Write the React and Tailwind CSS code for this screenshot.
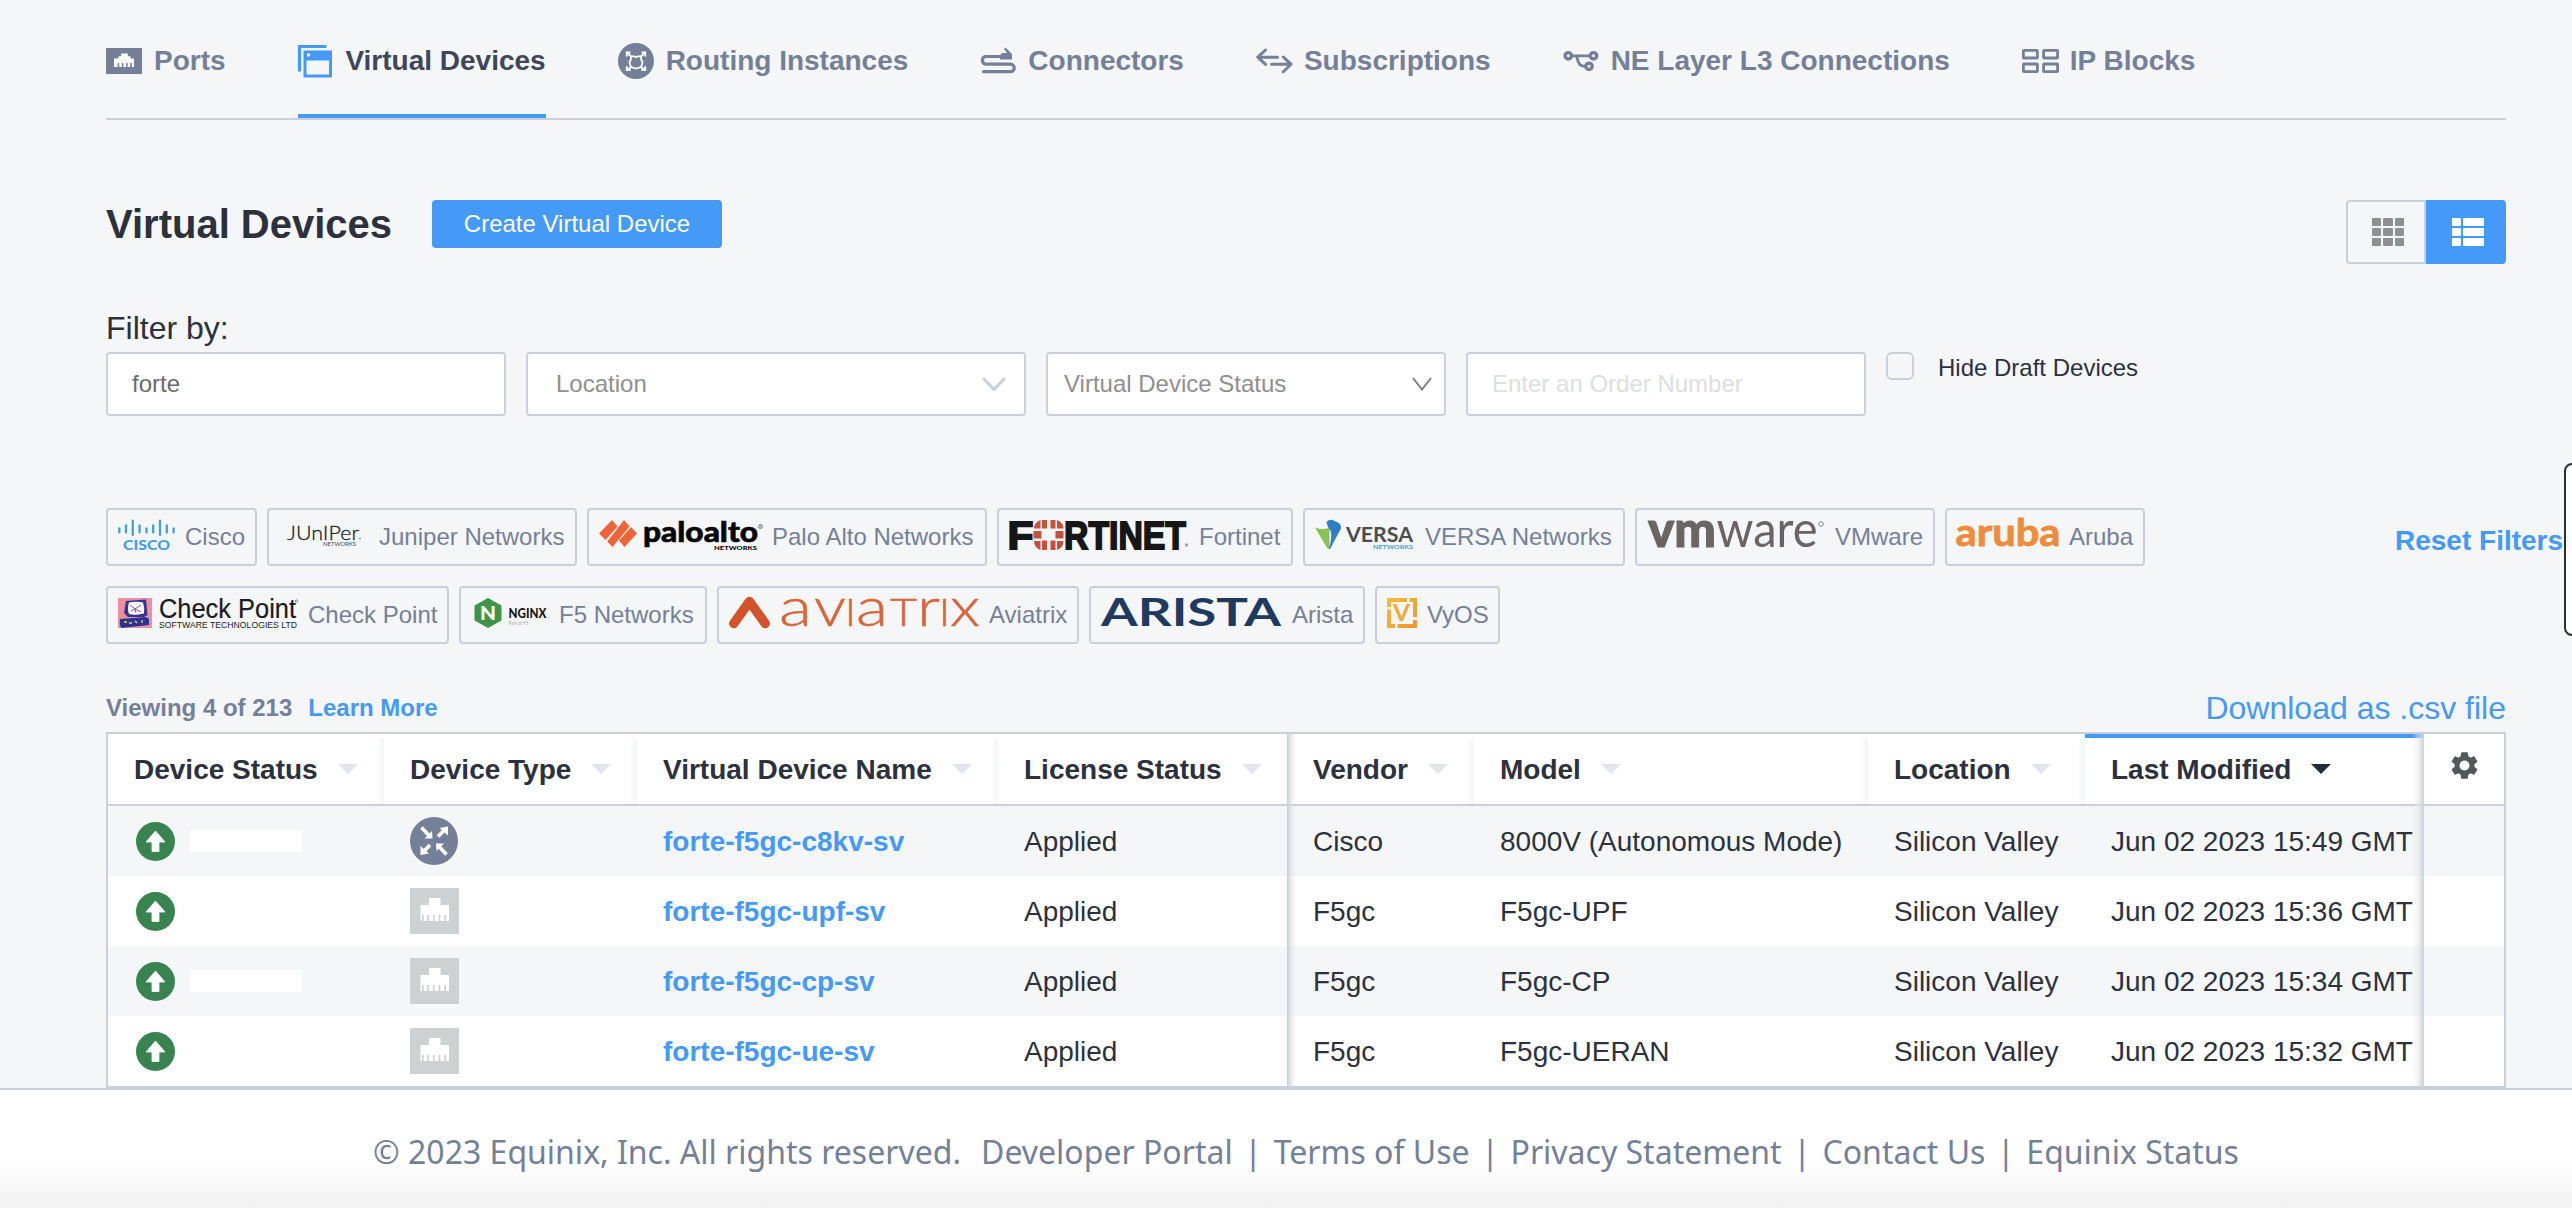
import React from "react";
import { MdSettings } from "react-icons/md";

const LATO = "Lato, sans-serif";
const ARIAL = '"Liberation Sans", Arial, sans-serif';

/* ---------- tab icons ---------- */

function Jack({ className, width, height }) {
  return (
    <svg className={className} width={width} height={height} viewBox="0 0 36 26">
      <rect width="36" height="26" fill="currentColor" />
      <path d="M8 19V10.5h4.500V8.200h2.700V5.500h6.600v2.700h2.700v2.300H28V19h-2.200v-4h-1.600v4h-2.600v-4H20v4h-2.600v-4h-1.600v4h-2.600v-4h-1.600v4z" fill="#fff" />
    </svg>
  );
}

function WindowsIcon() {
  return (
    <svg width="36" height="34" viewBox="0 0 36 34" className="-ml-px">
      <path d="M2.500 27.500V2.500h27" fill="none" stroke="#4599f7" strokeWidth="3.200" />
      <rect x="8" y="8" width="25.500" height="24" fill="#f4f6f8" stroke="#4599f7" strokeWidth="3" />
      <rect x="7" y="7" width="27.500" height="9.500" fill="#4599f7" />
      <circle cx="11.500" cy="11" r="1.700" fill="#fff" />
    </svg>
  );
}

function RoutingIcon() {
  return (
    <svg width="36" height="36" viewBox="0 0 36 36">
      <circle cx="18" cy="18" r="18" fill="currentColor" />
      <g fill="none" stroke="#fff" strokeWidth="1.800" strokeLinecap="round" strokeLinejoin="round">
        <path d="M8.500 9.500l4.500 3.800h3l2 1 2-1h3l4.500-3.800M13 13.300q.5 3-1.500 5.700 0 3.500 2 5l-5 3M23 13.300q-.5 3 1.500 5.700 0 3.500-2 5l5 3M13.500 24q4.500 2.600 9 0" />
        <path d="M8.800 12.800V9.500h3M27.200 12.800V9.500h-3M8.800 24v3H12M27.200 24v3H24" />
      </g>
    </svg>
  );
}

function ConnectorIcon() {
  return (
    <svg width="36" height="28" viewBox="0 0 36 28">
      <path d="M20 9.500H5.500a3.700 3.900 0 0 0 0 7.700h25a3.600 3.600 0 0 1 0 7.500H3.500" fill="none" stroke="currentColor" strokeWidth="3.200" strokeLinecap="round" />
      <path d="M19 9.500l3-3.500h5l-3-4 1.500-1.500L32 7v5.500H20.500z" fill="currentColor" />
    </svg>
  );
}

function SwapIcon() {
  return (
    <svg width="37" height="28" viewBox="0 0 37 28" className="-mr-px">
      <g fill="none" stroke="currentColor" strokeWidth="3" strokeLinecap="round" strokeLinejoin="round">
        <path d="M9.500 3L1.800 10.200l7.700 7.200M2 10.200h19.500M27.300 10l7.700 7.200-7.700 7.500M34.500 17.200H15.500" />
      </g>
    </svg>
  );
}

function LayerIcon() {
  return (
    <svg width="36" height="28" viewBox="0 0 36 28">
      <g fill="none" stroke="currentColor" strokeWidth="3.400">
        <circle cx="5.300" cy="8.800" r="3.200" />
        <circle cx="30.500" cy="8.800" r="3.200" />
        <circle cx="26" cy="19.300" r="3.200" />
        <path d="M9 8.800h18M13.500 9c2 7 2.500 10.300 9 10.300" strokeWidth="2.800" />
      </g>
    </svg>
  );
}

function BlocksIcon() {
  return (
    <svg width="37" height="24" viewBox="0 0 37 24" className="-mr-px">
      <g fill="none" stroke="currentColor" strokeWidth="2.800">
        <rect x="1.400" y="1.400" width="14" height="7.600" rx="0.500" />
        <rect x="21.600" y="1.400" width="14" height="7.600" rx="0.500" />
        <rect x="1.400" y="15" width="14" height="7.600" rx="0.500" />
        <rect x="21.600" y="15" width="14" height="7.600" rx="0.500" />
      </g>
    </svg>
  );
}

const TABS = [
  ["Ports", <Jack width="36" height="26" />],
  ["Virtual Devices", <WindowsIcon />],
  ["Routing Instances", <RoutingIcon />],
  ["Connectors", <ConnectorIcon />],
  ["Subscriptions", <SwapIcon />],
  ["NE Layer L3 Connections", <LayerIcon />],
  ["IP Blocks", <BlocksIcon />],
];

/* ---------- vendor logos ---------- */

function Logo({ w, children }) {
  return (
    <svg width={w} height="30" viewBox={`0 0 ${w} 30`} className="shrink-0 overflow-visible">
      {children}
    </svg>
  );
}

function Word({ x, y, len, size, children, ...rest }) {
  return (
    <text x={x} y={y} fontSize={size} textLength={len} lengthAdjust="spacingAndGlyphs" fontFamily={LATO} {...rest}>
      {children}
    </text>
  );
}

const CISCO_BARS = [
  [1.3, 7.7, 13], [8, 4.7, 13], [14.8, 0, 15.5], [21.6, 4.700, 13], [28.500, 7.700, 13],
  [35.200, 4.700, 13], [42, 0, 15.500], [48.800, 4.700, 13], [55.600, 7.700, 13],
];

const CiscoLogo = () => (
  <Logo w={57}>
    <g stroke="#42a0db" strokeWidth="2.300" strokeLinecap="round">
      {CISCO_BARS.map(([x, a, b]) => <line key={x} x1={x} x2={x} y1={a + 0.6} y2={b - 0.6} />)}
    </g>
    <Word x={5} y={30} len={47} size={14} fontWeight="900" fill="#42a0db">CISCO</Word>
  </Logo>
);

const JuniperLogo = () => (
  <Logo w={90}>
    <Word x={8} y={19.500} len={72} size={20} fontWeight="300" fill="#222" stroke="#222" strokeWidth="0.300">JUnIPer</Word>
    <Word x={44} y={25.500} len={33} size={6} fill="#444">NETWORKS</Word>
    <circle cx="81" cy="18.500" r="0.700" fill="#444" />
  </Logo>
);

const PaloLogo = () => (
  <Logo w={163}>
    <g fill="#ec6438">
      <path d="M0 13.500L13 0l5.500 6.500L6.500 20z" />
      <path d="M8.300 21.500L25 0l5.500 6.500L13.500 27z" />
      <path d="M20 20.500L32 7l6 6.500L25.500 27z" />
    </g>
    <Word x={44} y={22} len={115} size={29} fontWeight="900" fill="#050505" stroke="#050505" strokeWidth="0.6">paloalto</Word>
    <Word x={115} y={30} len={43} size={6} fontWeight="900" fill="#050505">NETWORKS</Word>
    <circle cx="161.500" cy="6.500" r="2" fill="none" stroke="#555" strokeWidth="0.700" />
    <text x="160.500" y="7.700" fontSize="3" fontFamily={LATO} fill="#555">R</text>
  </Logo>
);

const FortinetLogo = () => (
  <Logo w={180}>
    <Word x={-1.500} y={29} len={26} size={39} fontWeight="bold" fill="#161616" stroke="#161616" strokeWidth="1.800" fontFamily={ARIAL}>F</Word>
    <g fill="#c9503c">
      <path d="M33 0h5v8.500h-5zM41.500 0h5v8.500h-5zM33 20.500h5V30h-5zM41.500 20.500h5V30h-5z" />
      <path d="M31.500 0v8.500H25q0-6 6.500-8.500zM48 0v8.500h6.500q0-6-6.500-8.500zM31.500 30v-9H25q0 6.500 6.500 9zM48 30v-9h6.500q0 6.500-6.500 9z" />
      <path d="M24.500 11h8v7.500h-8zM46.500 11h8v7.500h-8z" />
    </g>
    <Word x={55} y={29} len={122} size={39} fontWeight="bold" fill="#161616" stroke="#161616" strokeWidth="1.800" fontFamily={ARIAL}>RTINET</Word>
    <circle cx="177.500" cy="25" r="1.800" fill="#aaa" />
  </Logo>
);

const VersaLogo = () => (
  <Logo w={100}>
    <path d="M0 7.500q8 3 14.500 0V29q-2 0-3-2z" fill="#8dc153" />
    <path d="M11.500 2q4-4 9-.5 6 1.500 5.500 7L15 29h-1.200q4-12 1.700-18.500-2.500-2-4-8.500z" fill="#2f7fc4" />
    <Word x={31} y={22} len={67} size={21} fontWeight="bold" fill="#4c4c4e">VERSA</Word>
    <Word x={58} y={29} len={40} size={6.200} fontWeight="bold" fill="#3f9fdb">NETWORKS</Word>
  </Logo>
);

const VmwareLogo = () => (
  <Logo w={178}>
    <Word x={1} y={27} len={68} size={49} fontWeight="900" fill="#6a6465" stroke="#6a6465" strokeLinejoin="round">vm</Word>
    <Word x={69.500} y={27} len={101} size={50} fill="#6a6465">ware</Word>
    <circle cx="174" cy="4" r="2.300" fill="none" stroke="#8a8586" />
  </Logo>
);

const ArubaLogo = () => (
  <Logo w={102}>
    <Word x={-1.500} y={25.500} len={105} size={38} fontWeight="bold" fill="#ed8c3a" stroke="#ed8c3a" strokeWidth="0.800" strokeLinejoin="round">
      aruba
    </Word>
  </Logo>
);

const CheckPointLogo = () => (
  <Logo w={180}>
    <rect width="34" height="30" fill="#e8919f" />
    <path d="M8 3l20-1.500L29.500 17 26 19H10L6 15z" fill="#35339b" />
    <path d="M11 4.500q8-1.500 14 0 2 6 1 11-7 2-15 .5-2-5 0-11.500z" fill="#fff" />
    <path d="M12 7l5 4 6-4M13 13l4-2 6 3M17 11l1 4" fill="none" stroke="#a04a90" strokeWidth="1" />
    <path d="M2 21l26-2 3 2v6L3 30q-2-4-1-9z" fill="#2c3290" />
    <path d="M6 24h3M11 25h3M17 23l2 2M24 22v3" stroke="#e8d44a" strokeWidth="1.400" />
    <Word x={41} y={19.500} len={137} size={27} fill="#1b1b1b" stroke="#1b1b1b" strokeWidth="0.200" fontFamily={ARIAL}>Check Point</Word>
    <Word x={41} y={30} len={138} size={8.700} fill="#1b1b1b" fontFamily={ARIAL}>SOFTWARE TECHNOLOGIES LTD</Word>
    <circle cx="178.500" cy="3" r="1.200" fill="none" stroke="#444" strokeWidth="0.600" />
  </Logo>
);

const NginxLogo = () => (
  <Logo w={78}>
    <g transform="translate(3.500 0)">
      <path d="M13.500 0L27 7.500v15L13.500 30 0 22.500v-15z" fill="#3f9547" />
      <Word x={5.500} y={21.500} len={16} size={18} fontWeight="900" fill="#fff">N</Word>
      <Word x={34} y={20} len={38} size={14} fontWeight="900" fill="#161616">NGINX</Word>
      <Word x={34} y={26.500} len={20} size={4.800} fill="#aaa">Part of F5</Word>
      <circle cx="74.500" cy="19.500" r="0.600" fill="#aaa" />
    </g>
  </Logo>
);

/* Unicase wordmark: capitals are scaled down to the x-height of the lowercase letters. */
const AviatrixLogo = () => (
  <Logo w={250}>
    <path d="M4.800 25.500L20.500 3.500 36.200 25.500" fill="none" stroke="#d2532a" strokeWidth="9.500" strokeLinecap="round" strokeLinejoin="round" />
    <g fill="#d9653a" stroke="#d9653a" strokeWidth="0.500" fontWeight="300">
      <Word x={50} y={28} len={33} size={54}>a</Word>
      <Word x={85} y={28} len={32} size={54}>v</Word>
      <Word x={116} y={28} len={11} size={38}>I</Word>
      <Word x={127} y={28} len={32} size={54}>a</Word>
      <Word x={161} y={28} len={27} size={38}>T</Word>
      <Word x={188} y={28} len={23} size={54}>r</Word>
      <Word x={210} y={28} len={11} size={38}>I</Word>
      <Word x={221} y={28} len={30} size={54}>x</Word>
    </g>
  </Logo>
);

const AristaLogo = () => (
  <Logo w={181}>
    <Word x={0} y={28} len={180} size={38.500} fontWeight="bold" fill="#1f3960">ARISTA</Word>
  </Logo>
);

const VyosLogo = () => (
  <Logo w={30}>
    <defs>
      <linearGradient id="vyos" x1="0" y1="0" x2="1" y2="1">
        <stop offset="0" stopColor="#f7bf3c" />
        <stop offset="1" stopColor="#f0932f" />
      </linearGradient>
    </defs>
    <path d="M0 0h20v4H4v5H0zM22.500 0H30v19h-4V4h-3.500zM0 11.500h4V26h4v4H0zM10.500 26H26v-4h4v8H10.500z" fill="url(#vyos)" />
    <Word x={6} y={23} len={17} size={22} fontWeight="bold" fill="#f4a936">V</Word>
  </Logo>
);

const VENDORS = [
  ["Cisco", "w-[151px]", CiscoLogo],
  ["Juniper Networks", "w-[310px]", JuniperLogo],
  ["Palo Alto Networks", "w-[400px]", PaloLogo],
  ["Fortinet", "w-[296px]", FortinetLogo],
  ["VERSA Networks", "w-[322px]", VersaLogo],
  ["VMware", "w-[300px]", VmwareLogo],
  ["Aruba", "w-[200px]", ArubaLogo],
  ["Check Point", "w-[343px]", CheckPointLogo],
  ["F5 Networks", "w-[248px]", NginxLogo],
  ["Aviatrix", "w-[362px]", AviatrixLogo],
  ["Arista", "w-[276px]", AristaLogo],
  ["VyOS", "w-[125px]", VyosLogo],
];

/* ---------- table ---------- */

const GRID = "grid grid-cols-[276px_253px_361px_289px_187px_394px_217px_339px_80px]";

const COLUMNS = ["Device Status", "Device Type", "Virtual Device Name", "License Status", "Vendor", "Model", "Location", "Last Modified"];

const ROWS = [
  ["forte-f5gc-c8kv-sv", "Cisco", "8000V (Autonomous Mode)", "Jun 02 2023 15:49 GMT", true],
  ["forte-f5gc-upf-sv", "F5gc", "F5gc-UPF", "Jun 02 2023 15:36 GMT", false],
  ["forte-f5gc-cp-sv", "F5gc", "F5gc-CP", "Jun 02 2023 15:34 GMT", false],
  ["forte-f5gc-ue-sv", "F5gc", "F5gc-UERAN", "Jun 02 2023 15:32 GMT", false],
];

function UpIcon() {
  return (
    <svg width="39" height="39" viewBox="0 0 39 39" className="mb-px">
      <circle cx="19.500" cy="19.500" r="19.500" fill="#38834f" />
      <path d="M19.500 9l9.500 11h-6v9.500h-7V20h-6z" fill="#fff" stroke="#fff" strokeWidth="0.800" strokeLinejoin="round" />
    </svg>
  );
}

function RouterIcon() {
  return (
    <svg width="48" height="48" viewBox="0 0 48 48" className="mb-0.5">
      <circle cx="24" cy="24" r="24" fill="#748098" />
      <g stroke="#fff" strokeWidth="3.600">
        <path d="M11.500 10.500l7 7.500M28 19.500l6.500-6.500M20 28l-6.500 6.500M36.500 37.500l-7-7.500" />
      </g>
      <path d="M22.500 21.500h-8L22 14zM38 9.500v9L29.500 11zM10.500 38v-9l8.500 7.500zM26 26.500h8L26.500 34z" fill="#fff" />
    </svg>
  );
}

function Caret({ active }) {
  return (
    <svg width="20" height="10" viewBox="0 0 20 10" className="mb-0.5 ml-5">
      <path d="M0 0h20L10 10z" fill={active ? "#262b38" : "#e2e5ea"} />
    </svg>
  );
}

function HeaderCell({ label, index }) {
  const active = index === 7;
  return (
    <div className="flex h-[70px] justify-between">
      <div className={`flex grow items-center pl-[26px] ${active ? "border-t-4 border-[#4599f7] pb-0.5" : "pt-0.5"}`}>
        <span>{label}</span>
        <Caret active={active} />
      </div>
      {index !== 3 && !active && <div className="mt-1 w-2 bg-linear-to-r from-white to-[#f4f5f6]" />}
    </div>
  );
}

function DeviceTable() {
  return (
    <div className="relative border-2 border-[#cacfd9] bg-white text-[28px] whitespace-nowrap text-[#2c313d]">
      <div className={`${GRID} box-content h-[70px] border-b-2 border-[#cacfd9] font-bold`}>
        {COLUMNS.map((label, i) => <HeaderCell key={label} label={label} index={i} />)}
        <div className="flex items-center justify-center pb-2">
          <MdSettings size={33} color="#555657" />
        </div>
      </div>
      {ROWS.map(([name, vendor, model, modified, router], i) => (
        <div key={name} className={`${GRID} h-[70px] items-center pt-0.5 ${i % 2 === 0 ? "bg-[#f4f6f8]" : "bg-white"}`}>
          <div className="flex items-center pl-7">
            <UpIcon />
            <span className="mb-0.5 ml-[15px] h-[22px] w-28 bg-white" />
          </div>
          <div className="pl-[26px]">
            {router ? <RouterIcon /> : (
              <svg width="49" height="46" viewBox="0 0 49 46" className="mb-0.5">
                <rect width="49" height="46" fill="#cfd0d2" />
                <path d="M10.500 33V17H19v-7h11.500v7H39v16h-3v-6h-1.700v6h-4v-6h-1.700v6h-4v-6H23v6h-4v-6h-1.700v6h-3.600v-6H12v6z" fill="#fff" />
              </svg>
            )}
          </div>
          <div className="pl-[26px] font-bold text-[#4599f7]">{name}</div>
          <div className="pl-[26px]">Applied</div>
          <div className="pl-[26px]">{vendor}</div>
          <div className="pl-[26px]">{model}</div>
          <div className="pl-[26px]">Silicon Valley</div>
          <div className="pl-[26px]">{modified}</div>
          <div />
        </div>
      ))}
      <div className="absolute inset-y-0 left-[1179px] w-[9px] bg-linear-to-r from-[#c8cdd6] via-[#dfe3e8]/60 to-transparent" />
      <div className="absolute inset-y-0 right-20 w-3 bg-linear-to-l from-[#cdd1d9] via-[#e3e6ea]/50 to-transparent" />
    </div>
  );
}

const FIELD = "flex h-16 items-center rounded border-2 border-[#cacfd9] bg-white";

export default function App() {
  return (
    <div className="relative h-[1208px] w-[2572px] overflow-hidden bg-[#f4f6f8] font-['Liberation_Sans',Arial,sans-serif]">
      <div className="ml-[106px] w-[2400px]">
        <nav className="flex gap-[72px] border-b-2 border-[#cacfd9] text-[28px] font-bold whitespace-nowrap text-[#748098]">
          {TABS.map(([label, icon]) => (
            <a
              key={label}
              className={`flex h-[118px] items-center border-b-4 pt-[7px] ${
                label === "Virtual Devices" ? "gap-[12.8px] border-[#4599f7] text-[#40455a]" : "gap-3 border-transparent"
              }`}
            >
              {icon}
              <span>{label}</span>
            </a>
          ))}
        </nav>

        <div className="mt-20 flex h-16 items-start">
          <h1 className="w-[326px] text-[40px] leading-[49px] font-bold text-[#2c313d]">Virtual Devices</h1>
          <button className="h-12 w-[290px] rounded bg-[#4599f7] text-2xl leading-none text-white">Create Virtual Device</button>
          <div className="ml-auto flex">
            <div className="flex h-16 w-20 items-center justify-center rounded-l border-2 border-[#cacfd9]">
              <div className="grid grid-cols-3 gap-x-0.5 gap-y-0.5 pl-1">
                {Array.from({ length: 9 }, (_, i) => <span key={i} className="h-2 w-[9.5px] rounded-[1px] bg-[#8f8f8f]" />)}
              </div>
            </div>
            <div className="flex h-16 w-20 items-center justify-center rounded-r bg-[#4599f7]">
              <div className="grid grid-cols-[9px_21px] gap-0.5 pl-1">
                {Array.from({ length: 6 }, (_, i) => <span key={i} className="h-2 rounded-[1px] bg-white" />)}
              </div>
            </div>
          </div>
        </div>

        <div className="mt-[46px] h-[42px] text-[32px] leading-9 text-[#2c313d]">Filter by:</div>
        <div className="flex gap-5 text-2xl">
          <div className={`${FIELD} w-[400px] pl-6 text-[#6b6b6b]`}>forte</div>
          <div className={`${FIELD} w-[500px] justify-between pr-[18px] pl-7 text-[#8f8f8f]`}>
            Location
            <svg width="24" height="14" viewBox="0 0 24 14"><path d="M1 1l11 11.500L23 1" fill="none" stroke="#cacfd9" strokeWidth="3" /></svg>
          </div>
          <div className={`${FIELD} w-[400px] justify-between pr-3 pl-4 text-[#8f8f8f]`}>
            Virtual Device Status
            <svg width="20" height="14" viewBox="0 0 20 14"><path d="M1 1l9 11.500L19 1" fill="none" stroke="#808080" strokeWidth="2" /></svg>
          </div>
          <div className={`${FIELD} w-[400px] pl-6 text-[#dedede]`}>Enter an Order Number</div>
          <div className="flex gap-6 text-[#2c313d]">
            <span className="size-7 rounded-md border-2 border-[#cacfd9]" />
            <span className="leading-8">Hide Draft Devices</span>
          </div>
        </div>

        <div className="mt-[92px] flex w-[2466px] items-start justify-between">
          <div className="flex w-[2100px] flex-wrap gap-x-2.5 gap-y-5">
            {VENDORS.map(([name, width, Mark]) => (
              <div key={name} className={`${width} flex h-[58px] gap-2.5 rounded border-2 border-[#cacfd9] p-2.5 text-2xl whitespace-nowrap text-[#748098]`}>
                <Mark />
                <span className="mt-0.5 leading-[30px]">{name}</span>
              </div>
            ))}
          </div>
          <a className="mt-[17px] mr-[7px] w-[170px] text-[28px] leading-8 font-bold whitespace-nowrap text-[#4599f7]">Reset Filters</a>
        </div>

        <div className="mt-10 flex h-12 items-center justify-between text-[#4599f7]">
          <div className="flex gap-4 text-2xl font-bold">
            <span className="text-[#748098]">Viewing 4 of 213</span>
            <a>Learn More</a>
          </div>
          <a className="text-[32px]">Download as .csv file</a>
        </div>

        <DeviceTable />
      </div>

      <footer className="flex h-[120px] justify-center border-t-2 border-[#cacfd9] bg-linear-to-b from-white from-60% to-[#f2f2f2] pt-[38px] pr-1 pl-11 font-['Noto_Sans',sans-serif] text-[32px] leading-[48px] whitespace-nowrap text-[#748098]">
        <span className="mr-5">© 2023 Equinix, Inc. All rights reserved.</span>
        {["Developer Portal", "Terms of Use", "Privacy Statement", "Contact Us", "Equinix Status"].map((label, i) => (
          <React.Fragment key={label}>
            {i > 0 && <span className="w-[41px] text-center">|</span>}
            <a>{label}</a>
          </React.Fragment>
        ))}
      </footer>

      <div className="absolute top-[463px] right-[-12px] h-[173px] w-5 rounded-lg border-2 border-[#2c2f36] bg-white" />
    </div>
  );
}
